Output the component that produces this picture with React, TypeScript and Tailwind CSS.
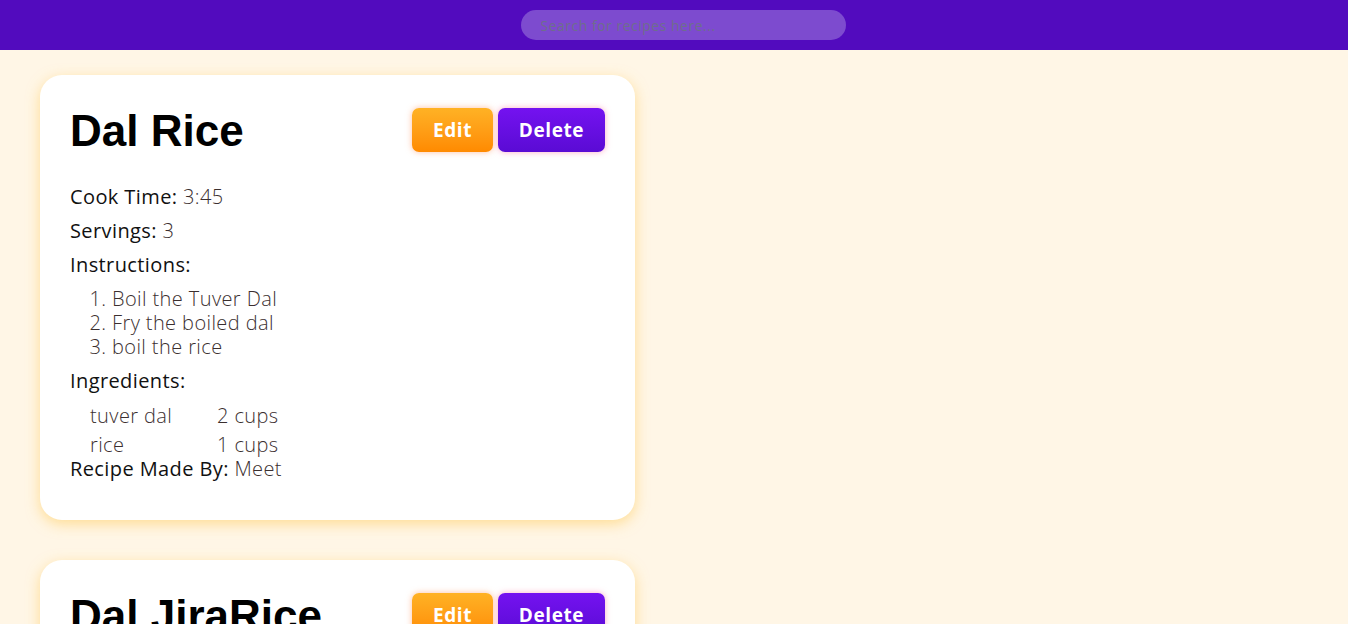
import React from 'react'

interface Recipe {
  id: number
  title: string
  cookTime: string
  servings: number
  instructions: string[]
  ingredients: { name: string; qty: string }[]
  author: string
}

const recipes: Recipe[] = [
  {
    id: 1,
    title: 'Dal Rice',
    cookTime: '3:45',
    servings: 3,
    instructions: ['Boil the Tuver Dal', 'Fry the boiled dal', 'boil the rice'],
    ingredients: [
      { name: 'tuver dal', qty: '2 cups' },
      { name: 'rice', qty: '1 cups' },
    ],
    author: 'Meet',
  },
  {
    id: 2,
    title: 'Dal JiraRice',
    cookTime: '1:30',
    servings: 2,
    instructions: ['Boil the dal', 'Fry the jira', 'boil the rice'],
    ingredients: [
      { name: 'dal', qty: '1 cups' },
      { name: 'rice', qty: '1 cups' },
    ],
    author: 'Meet',
  },
]

function RecipeCard({ recipe }: { recipe: Recipe }) {
  return (
    <div className="w-[595px] bg-white rounded-[22px] px-[30px] pt-[28px] pb-[41px] shadow-[0_4px_14px_rgba(255,200,80,0.55)]">
      {/* Header */}
      <div className="flex items-center justify-between">
        <h2 className="text-[44px] leading-[56px] font-bold text-black font-['Liberation_Sans',Arial,sans-serif]">
          {recipe.title}
        </h2>
        <div className="flex gap-[5px] mt-[-2px]">
          <button className="w-[81px] h-[44px] rounded-[7px] text-white text-[19px] tracking-[0.6px] font-bold bg-gradient-to-b from-[#ffb224] to-[#ff8a00] shadow-[0_0_6px_rgba(255,150,100,0.6)]">
            Edit
          </button>
          <button className="w-[107px] h-[44px] rounded-[7px] text-white text-[19px] tracking-[0.6px] font-bold bg-gradient-to-b from-[#7412f0] to-[#5a0bd4] shadow-[0_0_6px_rgba(255,120,160,0.6)]">
            Delete
          </button>
        </div>
      </div>

      {/* Details */}
      <div className="mt-[21px] text-[20px] tracking-[0.4px] font-normal text-[#111]">
        <p className="leading-[34px]">
          Cook Time: <span className="font-light text-[#3b2f2f]">{recipe.cookTime}</span>
        </p>
        <p className="leading-[34px]">
          Servings: <span className="font-light text-[#3b2f2f]">{recipe.servings}</span>
        </p>
        <p className="leading-[34px]">Instructions:</p>
        <ol className="list-decimal pl-[42px] font-light text-[#3b2f2f] py-[5px]">
          {recipe.instructions.map((step, i) => (
            <li key={i} className="leading-[24px]">{step}</li>
          ))}
        </ol>
        <p className="leading-[34px]">Ingredients:</p>
        <table className="ml-[18px] mt-[3px] font-light text-[#3b2f2f] border-separate border-spacing-0">
          <tbody>
            {recipe.ingredients.map((ing, i) => (
              <tr key={i}>
                <td className="w-[127px] px-[2px] py-[2px] leading-[25px]">{ing.name}</td>
                <td className="px-[2px] py-[2px] leading-[25px]">{ing.qty}</td>
              </tr>
            ))}
          </tbody>
        </table>
        <p className="leading-[20px]">
          Recipe Made By: <span className="font-light text-[#3b2f2f]">{recipe.author}</span>
        </p>
      </div>
    </div>
  )
}

export default function App() {
  return (
    <div className="min-h-screen bg-[#fff6e6] font-['Open_Sans',sans-serif]">
      {/* Navbar */}
      <div className="h-[50px] bg-[#520bbe] flex items-center justify-center">
        <input
          type="text"
          placeholder="Search for recipes here..."
          className="ml-[18px] w-[325px] h-[30px] rounded-full bg-[#7d4bcf] px-[20px] text-[14px] tracking-[0.5px] text-[#555] placeholder:text-[#6e6e8c] outline-none"
        />
      </div>

      {/* Recipes */}
      <div className="flex flex-col gap-[40px] pl-[40px] pt-[25px] pb-[40px]">
        {recipes.map((r) => (
          <RecipeCard key={r.id} recipe={r} />
        ))}
      </div>
    </div>
  )
}
